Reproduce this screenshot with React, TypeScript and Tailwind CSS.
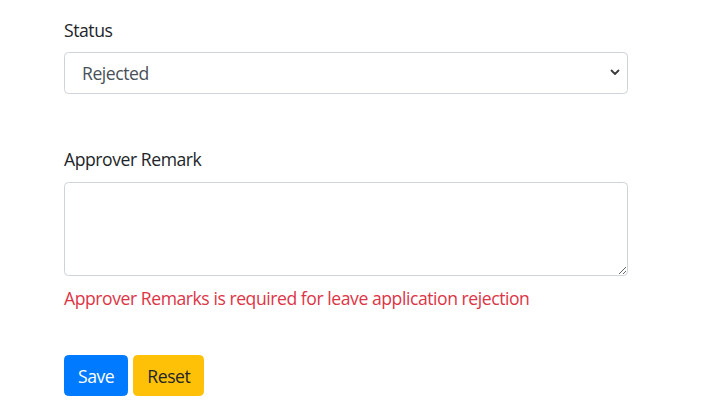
import React, { useState } from 'react';

const App: React.FC = () => {
    const [status, setStatus] = useState('Rejected');
    const [remark, setRemark] = useState('');

    return (
        <div className="min-h-[414px] w-full bg-white text-[#212529] text-[17.6px] leading-[26.4px] tracking-[-0.45px]" style={{ fontFamily: '"Segoe UI", "Open Sans", sans-serif' }}>
            <div className="ml-[64px] w-[564px] pt-[17px]">
                {/* Status */}
                <div>
                    <label className="block mb-[9px]">Status</label>
                    <div className="relative">
                        <select
                            value={status}
                            onChange={e => setStatus(e.target.value)}
                            className="block w-full h-[42px] appearance-none bg-white border border-[#ced4da] rounded-[4.4px] pl-[17px] pr-[36px] text-[#495057] tracking-[-0.45px] outline-none"
                        >
                            <option>Pending</option>
                            <option>Approved</option>
                            <option>Rejected</option>
                        </select>
                        <svg className="absolute right-[8px] top-[17px] pointer-events-none" width="10" height="7" viewBox="0 0 10 7" fill="none">
                            <path d="M1.5 1.5L5 5L8.5 1.5" stroke="#3c3c3c" strokeWidth="1.8" strokeLinecap="round" strokeLinejoin="round" />
                        </svg>
                    </div>
                </div>

                {/* Approver Remark */}
                <div className="mt-[52px]">
                    <label className="block mb-[9px]">Approver Remark</label>
                    <textarea
                        rows={3}
                        value={remark}
                        onChange={e => setRemark(e.target.value)}
                        className="block w-full h-[94px] border border-[#ced4da] rounded-[4.4px] px-[13px] py-[6px] text-[#495057] outline-none"
                    />
                    <div className="mt-[9px] text-[#dc3545]">Approver Remarks is required for leave application rejection</div>
                </div>

                {/* Buttons */}
                <div className="mt-[44px] flex gap-[5px]">
                    <button className="h-[41px] px-[13px] rounded-[4.4px] bg-[#007bff] text-white border border-[#007bff] tracking-[-0.45px]">Save</button>
                    <button className="h-[41px] px-[13px] rounded-[4.4px] bg-[#ffc107] text-[#212529] border border-[#ffc107] tracking-[-0.45px]">Reset</button>
                </div>
            </div>
        </div>
    );
};

export default App;
